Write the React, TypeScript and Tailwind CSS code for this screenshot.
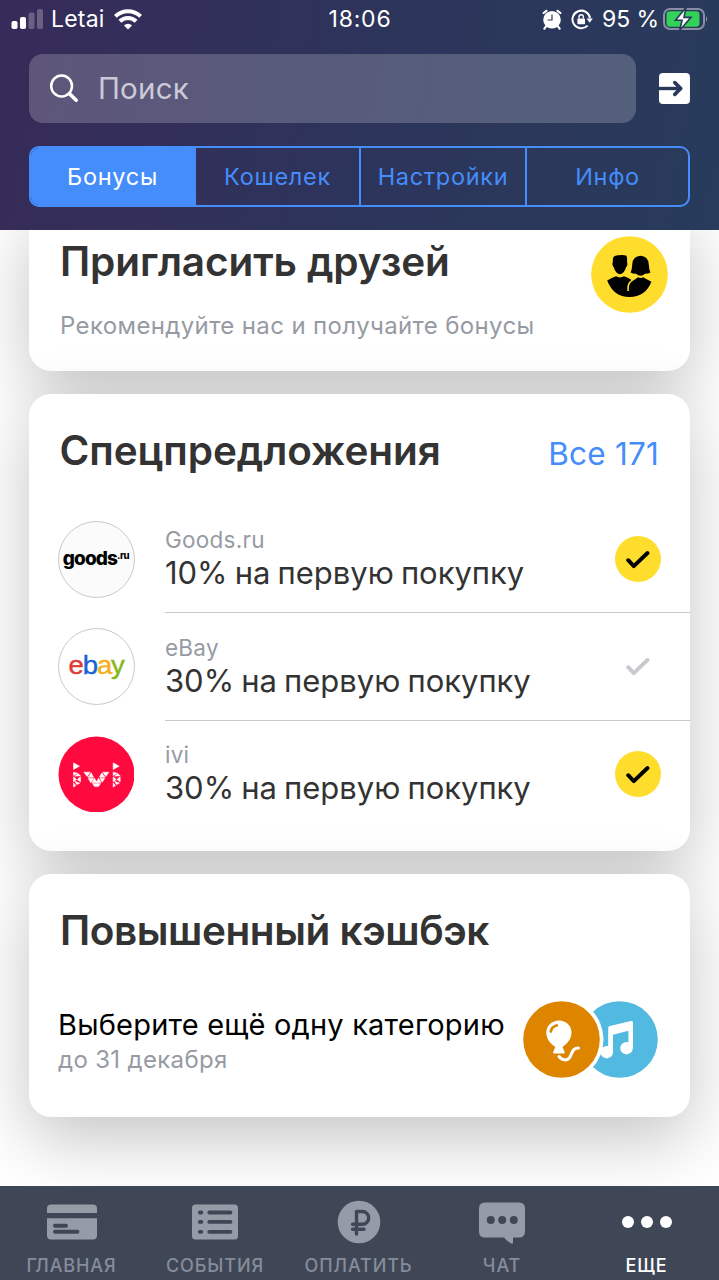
import type { ReactNode } from "react";
import clsx from "clsx";

type Offer = {
  id: string;
  shop: string;
  text: string;
  active: boolean;
  logo: ReactNode;
};

const TABS = ["Бонусы", "Кошелек", "Настройки", "Инфо"];

// Triangles of the ivi mosaic, one "x,y x,y x,y" string each.
const IVI_TRIANGLES = [
  "45,79 63,89 45,99",
  "45,107 57,110 45,117",
  "59,111 66,118 49,119",
  "45,121 54,129 45,136",
  "66,121 66,136 56,129",
  "49,134 64,140 55,144",
  "45,139 52,147 45,152",
  "76,107 95,107 86,120",
  "98,109 105,122 89,122",
  "89,125 105,125 97,139",
  "108,125 115,138 100,138",
  "102,141 126,141 120,150 108,150",
  "120,125 128,138 113,138",
  "124,125 139,125 131,137",
  "130,109 139,122 123,122",
  "133,107 151,107 142,120",
  "164,79 182,89 164,99",
  "164,107 176,110 164,117",
  "178,111 185,118 168,119",
  "164,121 173,129 164,136",
  "185,121 185,136 175,129",
  "168,134 183,140 174,144",
  "164,139 171,147 164,152",
];

function GoodsLogo() {
  return (
    <div className="flex size-[77px] items-center justify-center rounded-full border border-[#c9c9cb] bg-[#fbfbfb] pb-[2px] text-[19px] leading-none font-extrabold tracking-[-0.9px] text-black">
      goods
      <span className="-mt-[5px] text-[9.5px] tracking-[-0.4px]">.ru</span>
    </div>
  );
}

function EbayLogo() {
  return (
    <div className="flex size-[77px] items-center justify-center rounded-full border border-[#c9c9cb] bg-white pb-[3px]">
      <div className="flex scale-x-[1.1] font-['Liberation_Sans',sans-serif] text-[25px] leading-none tracking-[-1px] [-webkit-text-stroke:0.4px_currentColor]">
        <span className="text-[#dc3b36]">e</span>
        <span className="text-[#1a63d6]">b</span>
        <span className="text-[#f4af22]">a</span>
        <span className="text-[#86b817]">y</span>
      </div>
    </div>
  );
}

function IviLogo() {
  return (
    <svg viewBox="0 0 228 228" className="size-[77px] p-[0.5px]">
      <circle cx="114" cy="114" r="114" fill="#ff0a3f" />
      {IVI_TRIANGLES.map((points) => (
        <polygon key={points} points={points} fill="#fff" stroke="#fff" strokeWidth="1.6" />
      ))}
    </svg>
  );
}

const OFFERS: Offer[] = [
  { id: "goods", shop: "Goods.ru", text: "10% на первую покупку", active: true, logo: <GoodsLogo /> },
  { id: "ebay", shop: "eBay", text: "30% на первую покупку", active: false, logo: <EbayLogo /> },
  { id: "ivi", shop: "ivi", text: "30% на первую покупку", active: true, logo: <IviLogo /> },
];

function StatusBar() {
  return (
    <div className="grid h-[38px] grid-cols-3 items-center pr-[10px] pl-[11px] text-[23px] text-white">
      <div className="flex items-center">
        <svg width="33" height="21" viewBox="0 0 33 21" fill="#fff">
          <rect x="0.5" y="12" width="6" height="8" rx="1.8" />
          <rect x="9" y="8" width="6" height="12" rx="1.8" />
          <rect x="17.5" y="3.5" width="6" height="16.5" rx="1.8" opacity="0.25" />
          <rect x="26" y="0" width="6" height="20" rx="1.8" opacity="0.25" />
        </svg>
        <span className="ml-[7px] tracking-[0.2px]">Letai</span>
        <svg className="ml-[9.5px]" width="28" height="21" viewBox="0 0 28 21" fill="none" stroke="#fff" strokeWidth="4">
          <path d="M1.4 7.4a18 18 0 0 1 25.2 0" />
          <path d="M5.9 12.3a11.6 11.6 0 0 1 16.2 0" />
          <path d="M14 20.6l-4-4.2a5.8 5.8 0 0 1 8 0z" fill="#fff" stroke="none" />
        </svg>
      </div>
      <span className="text-center tracking-[0.8px]">18:06</span>
      <div className="flex items-center justify-end">
        <svg width="20" height="21" viewBox="0 0 20 21" fill="none">
          <circle cx="10" cy="10.8" r="8.8" fill="#fff" />
          <path d="M1.6 4L4.4 1.8M18.4 4L15.6 1.8M4.2 17.2l-1.8 2.4M15.8 17.2l1.8 2.4" stroke="#fff" strokeWidth="2.2" strokeLinecap="round" />
          <path d="M10 5.6v5.4H5.6" stroke="#2d345a" strokeWidth="1.2" />
        </svg>
        <svg className="ml-[9px]" width="22" height="21" viewBox="0 0 22 21" fill="none">
          <path d="M16.6 16.6A8.8 8.8 0 1 1 19 9.2" stroke="#fff" strokeWidth="2" />
          <path d="M15.6 9.4h6.2l-3.1 4.4z" fill="#fff" />
          <rect x="6.4" y="9.4" width="7.6" height="5.8" rx="0.8" fill="#fff" />
          <path d="M8 9.6V8a2.2 2.2 0 0 1 4.4 0v1.6" stroke="#fff" strokeWidth="1.4" />
        </svg>
        <span className="ml-[9px] tracking-[-0.1px] whitespace-nowrap">95 %</span>
        <svg className="ml-[4px]" width="46" height="24" viewBox="0 0 46 24">
          <rect x="1" y="2" width="40" height="20" rx="6" fill="none" stroke="#8b8fa5" strokeWidth="2" />
          <path d="M43 9q2.6 3 0 6z" fill="#8b8fa5" />
          <rect x="3.5" y="4.3" width="33" height="15.4" rx="3.4" fill="#32d158" />
          <path d="M23 0.5L12.5 13.2h6.6L16.6 23.5L28 10.4h-7z" fill="#fff" stroke="#2c385a" strokeWidth="1.6" />
        </svg>
      </div>
    </div>
  );
}

function Header() {
  return (
    <header className="relative z-10 h-[230px] shrink-0 bg-linear-[100deg,#372b59,#2d345b_50%,#283b5b]">
      <StatusBar />
      <div className="mt-4 flex items-center px-[29px]">
        <div className="flex h-[69px] w-[608px] items-center rounded-[14px] bg-[#ffffff33] pl-[20px]">
          <svg width="31" height="31" viewBox="0 0 31 31" fill="none" stroke="#fff" strokeLinecap="round">
            <circle cx="12.6" cy="13" r="10.4" strokeWidth="2.5" />
            <path d="M20.4 20.6l6.8 6.6" strokeWidth="3.6" />
          </svg>
          <span className="ml-[18px] text-[29.5px] tracking-[0.2px] text-[#cbcad8]">Поиск</span>
        </div>
        <svg className="ml-[23px]" width="31" height="31" viewBox="0 0 31 31">
          <rect width="31" height="31" rx="4" fill="#fff" />
          <path d="M0 15.5h20" stroke="#2a385a" strokeWidth="3.4" />
          <path d="M15.8 9.6l6 5.9l-6 5.9" fill="none" stroke="#2a385a" strokeWidth="3.6" strokeLinecap="round" strokeLinejoin="round" />
        </svg>
      </div>
      <div className="mx-[29px] mt-[23px] grid h-[61px] grid-cols-[163px_165px_166px_1fr] overflow-hidden rounded-[10px] border-2 border-[#458dfa]">
        {TABS.map((tab, i) => (
          <div
            key={tab}
            className={clsx(
              "flex items-center justify-center pt-px text-[23.5px] tracking-[0.7px]",
              i === 0 ? "bg-[#458dfa] text-white" : "border-l-2 border-[#458dfa] text-[#458dfa]",
            )}
          >
            {tab}
          </div>
        ))}
      </div>
    </header>
  );
}

function Card({ children, className }: { children: ReactNode; className: string }) {
  return (
    <section
      className={clsx(
        "mx-[29px] rounded-[22px] bg-white pt-[33px] shadow-[0_22px_68px_rgba(0,0,0,0.235)]",
        className,
      )}
    >
      {children}
    </section>
  );
}

function CardTitle({ children, className }: { children: ReactNode; className: string }) {
  return (
    <h2 className={clsx("text-[40.5px] leading-[48px] font-semibold text-[#333333]", className)}>
      {children}
    </h2>
  );
}

function FriendsIcon() {
  return (
    <svg width="77" height="77" viewBox="0 0 77 77" className="-mt-[2px] shrink-0">
      <circle cx="38.5" cy="38.5" r="38.3" fill="#ffdd2d" />
      <path d="M22.6 20.8q2-1.8 5-1.5q4.500-.6 8 .4q.8 2.600.4 6.600q.8.900.2 3q-.4 1.600-1.200 2q-.7 3.500-2.700 5.200q-1.500 1.800-3.400 1.800t-3.400-1.800q-2-1.700-2.700-5.200q-.8-.4-1.200-2q-.6-2.100.2-3q-.6-3 .8-5.500z" />
      <path d="M49.5 19.7q7.5.3 8.200 8.300q.2 5 1.700 8.500q-2.600 1.500-5.500 1.300q-1.800 1.900-4.400 1.900t-4.400-1.900q-2.900.2-5.500-1.300q1.500-3.500 1.700-8.500q.7-8 8.200-8.300z" />
      <path d="M16.2 44.500Q21 41.800 25 40.300q4 2.200 8 0q4 1.400 7.500 3.600q-3.700 2-4.200 7.100v4h1.600v-3.500q.4-5.500 4.800-7.300q2.400-1.300 4.200-3q2.700 1.500 5.200 0q4 2.200 8.300 4.600Q54.500 61 38.500 61T16.200 44.500z" />
    </svg>
  );
}

function Check({ active }: { active: boolean }) {
  return (
    <div
      className={clsx(
        "mr-[29px] flex size-[46px] items-center justify-center rounded-full",
        active && "bg-[#ffdd2d]",
      )}
    >
      <svg width="24" height="20" viewBox="0 0 24 20" fill="none" className="mt-[2px]">
        <path
          d="M2.2 10.2l5.6 5.9L21.5 3"
          stroke={active ? "#000" : "#c8cacd"}
          strokeWidth="3.9"
          strokeLinecap="round"
          strokeLinejoin="round"
        />
      </svg>
    </div>
  );
}

function OfferRow({ offer, last }: { offer: Offer; last: boolean }) {
  return (
    <div className="flex h-[107.5px] items-center pl-[28.5px]">
      {offer.logo}
      <div
        className={clsx(
          "ml-[30.5px] flex h-full flex-1 items-center justify-between border-b",
          last ? "border-transparent" : "border-[#c8c8ca]",
        )}
      >
        <div className="pt-px">
          <div className="text-[22.5px] leading-[28px] tracking-[0.25px] text-[#969ba3]">{offer.shop}</div>
          <div className="text-[31px] leading-[38px] tracking-[-0.03px] text-[#333333] [word-spacing:-1.5px]">
            {offer.text}
          </div>
        </div>
        <Check active={offer.active} />
      </div>
    </div>
  );
}

function CategoryIcons() {
  return (
    <svg width="136" height="77" viewBox="0 0 136 77">
      <circle cx="96.5" cy="38.5" r="38.3" fill="#52bae0" />
      <g fill="#fff">
        <circle cx="83.8" cy="51.2" r="6.2" />
        <circle cx="103.5" cy="47.2" r="6.2" />
        <path d="M85.2 51.5V27.2q0-1.6 1.6-2.2l21.2-5q2-.4 2 1.5v25.7h-4.6V29.8l-15.4 4V51.5z" />
      </g>
      <circle cx="38.5" cy="38.5" r="42" fill="#fff" />
      <circle cx="38.5" cy="38.5" r="38.3" fill="#de8500" />
      <path d="M36 19.5c7 0 12.5 5 12.5 12.3c0 6.5-5 11.5-9 14.2l2.2 5.3q.4 1.3-1 1.3h-9.6q-1.5 0-1-1.3l2.2-5.3c-4.300-2.700-9-7.700-9-14.200C23.300 24.500 29 19.500 36 19.500z" fill="#fff" />
      <path d="M27.800 30.500q1-5 6-6" stroke="#de8500" strokeWidth="2.800" fill="none" strokeLinecap="round" />
      <path d="M36 55.500c3 4 8.500 4.800 11 .5c2.200-4 2.500-9 8.500-9" stroke="#fff" strokeWidth="3" fill="none" strokeLinecap="round" />
    </svg>
  );
}

const NAV: { label: string; icon: ReactNode }[] = [
  {
    label: "ГЛАВНАЯ",
    icon: (
      <svg width="50" height="44" viewBox="0 0 50 44" fill="#959ba7">
        <path d="M0 13V8.5Q0 4.5 4 4.5H46Q50 4.5 50 8.5V13z" />
        <path d="M0 18.3H50V35.5Q50 39.5 46 39.5H4Q0 39.5 0 35.5z" />
        <path d="M8 25.8H19M8 31.8H30.5" stroke="#3f4757" strokeWidth="4" strokeLinecap="round" />
      </svg>
    ),
  },
  {
    label: "СОБЫТИЯ",
    icon: (
      <svg width="46" height="44" viewBox="0 0 46 44">
        <rect y="4.5" width="46" height="35" rx="3.5" fill="#959ba7" />
        <path
          d="M7.8 12.5h1.6M7.8 21.9h1.6M7.8 31.8h1.6M17.3 12.5H38.5M17.3 21.9H38.5M17.3 31.8H38.5"
          stroke="#3f4757"
          strokeWidth="3.8"
          strokeLinecap="round"
        />
      </svg>
    ),
  },
  {
    label: "ОПЛАТИТЬ",
    icon: (
      <svg width="44" height="44" viewBox="0 0 44 44" fill="none">
        <circle cx="22" cy="22" r="21.3" fill="#959ba7" />
        <path
          d="M19.5 34V11.5h5.8a6.3 6.3 0 0 1 0 12.8H15.5M15.5 29.3H27"
          stroke="#3f4757"
          strokeWidth="3.4"
          strokeLinecap="round"
          strokeLinejoin="round"
        />
      </svg>
    ),
  },
  {
    label: "ЧАТ",
    icon: (
      <svg width="46" height="44" viewBox="0 0 46 44">
        <path d="M6 2.5H40Q46 2.5 46 8.5V31.5Q46 37.5 40 37.5H34V42.5Q34 44 32.5 43.5Q28 41.5 25 37.5H6Q0 37.5 0 31.5V8.5Q0 2.5 6 2.5z" fill="#959ba7" />
        <g fill="#3f4757">
          <circle cx="11.8" cy="20" r="4" />
          <circle cx="23.2" cy="20" r="4" />
          <circle cx="34.8" cy="20" r="4" />
        </g>
      </svg>
    ),
  },
  {
    label: "ЕЩЕ",
    icon: (
      <svg width="50" height="44" viewBox="0 0 50 44" fill="#fff">
        <circle cx="6" cy="22" r="6" />
        <circle cx="25" cy="22" r="6" />
        <circle cx="44" cy="22" r="6" />
      </svg>
    ),
  },
];

function BottomNav() {
  return (
    <nav className="relative z-10 grid h-[94px] shrink-0 grid-cols-[143px_144px_143px_144px_145px] bg-[#3f4757]">
      {NAV.map((item) => (
        <div key={item.label} className="flex flex-col items-center pt-[14px]">
          {item.icon}
          <span
            className={clsx(
              "mt-[10px] text-[18px] leading-[24px] font-medium tracking-[0.9px]",
              item.label === "ЕЩЕ" ? "text-white" : "text-[#868d9a]",
            )}
          >
            {item.label}
          </span>
        </div>
      ))}
    </nav>
  );
}

export default function App() {
  return (
    <div className="flex h-[1280px] w-[719px] flex-col overflow-hidden bg-white font-['Inter',sans-serif]">
      <Header />
      <main className="min-h-0 flex-1">
        <Card className="-mt-[25px] h-[166px]">
          <div className="flex justify-between pr-[22.5px] pl-[31px]">
            <div>
              <CardTitle className="tracking-[-0.12px]">Пригласить друзей</CardTitle>
              <p className="mt-[25px] text-[24px] leading-[30px] tracking-[0.37px] text-[#969ba3]">
                Рекомендуйте нас и получайте бонусы
              </p>
            </div>
            <FriendsIcon />
          </div>
        </Card>

        <Card className="mt-[23px] h-[457px]">
          <div className="mb-[30.5px] flex items-baseline justify-between pr-[31px] pl-[30.5px]">
            <CardTitle className="tracking-[-0.06px]">Спецпредложения</CardTitle>
            <a className="text-[31.5px] leading-[38px] tracking-[0.2px] text-[#458dfa]">Все 171</a>
          </div>
          {OFFERS.map((offer, i) => (
            <OfferRow key={offer.id} offer={offer} last={i === OFFERS.length - 1} />
          ))}
        </Card>

        <Card className="mt-[23px] h-[243px]">
          <div className="pl-[31px]">
            <CardTitle className="tracking-[-0.43px]">Повышенный кэшбэк</CardTitle>
          </div>
          <div className="mt-[46px] flex items-center justify-between pr-[31px] pl-[29px]">
            <div className="pt-[3px]">
              <div className="text-[29px] leading-[36px] tracking-[0.2px] text-black">
                Выберите ещё одну категорию
              </div>
              <div className="mt-px text-[24px] leading-[31px] tracking-[0.33px] text-[#969ba3]">до 31 декабря</div>
            </div>
            <CategoryIcons />
          </div>
        </Card>
      </main>
      <BottomNav />
    </div>
  );
}
